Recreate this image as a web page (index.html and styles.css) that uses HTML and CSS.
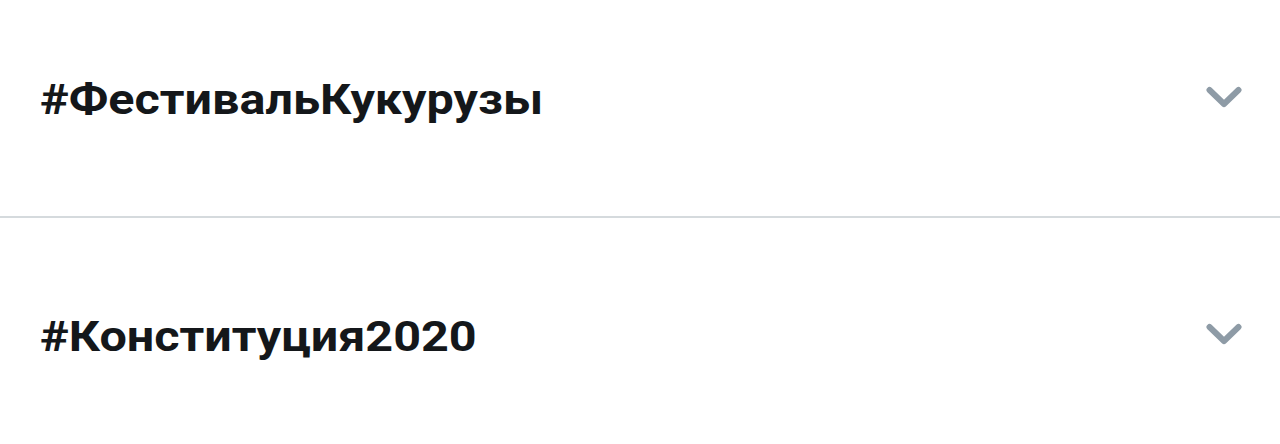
FILE: index.html
```html
<!DOCTYPE html>
<html lang="ru">
<head>
  <meta charset="UTF-8" />
  <title>Тренды</title>
  <link rel="stylesheet" href="styles.css">
</head>
<body>
  <div class="trends">
    <div class="trend">
      <span class="tag">#ФестивальКукурузы</span>
      <svg class="chevron" viewBox="0 0 36 24" width="36" height="24">
        <path d="M3.5 4 L18 18 L32.5 4" />
      </svg>
    </div>
    <div class="trend">
      <span class="tag">#Конституция2020</span>
      <svg class="chevron" viewBox="0 0 36 24" width="36" height="24">
        <path d="M3.5 4 L18 18 L32.5 4" />
      </svg>
    </div>
  </div>
</body>
</html>
```

FILE: styles.css
```css
body {
  margin: 0;
  background: #fff;
  font-family: 'Roboto', 'Liberation Sans', sans-serif;
  color: #14171a;
}
.trends {
  margin-top: -18px;
}
.trend {
  height: 236px;
  display: flex;
  align-items: center;
  justify-content: space-between;
  padding: 0 38px 0 40px;
  box-sizing: border-box;
  border-bottom: 2px solid #d5dadd;
}
.trend:last-child {
  border-bottom: none;
}
.tag {
  display: inline-block;
  font-size: 42px;
  font-weight: 700;
  transform: scaleX(1.155);
  transform-origin: left center;
}
.chevron {
  fill: none;
  stroke: #8e9ba6;
  stroke-width: 6;
  stroke-linecap: round;
  stroke-linejoin: round;
  margin-bottom: 2px;
}
```
